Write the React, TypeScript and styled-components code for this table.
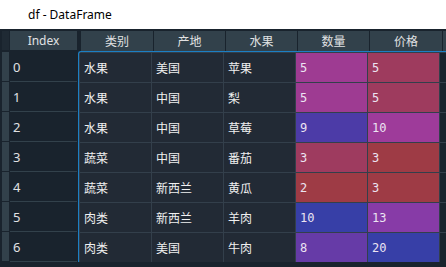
import styled, { createGlobalStyle } from 'styled-components';

const GlobalStyle = createGlobalStyle`
  html, body {
    margin: 0;
    padding: 0;
    background: #19232d;
  }
  body {
    font-family: "Noto Sans", "Noto Sans CJK SC", sans-serif;
  }
`;

type Row = {
  kind: string;
  origin: string;
  fruit: string;
  qty: number;
  price: number;
};

const rows: Row[] = [
  { kind: '水果', origin: '美国', fruit: '苹果', qty: 5, price: 5 },
  { kind: '水果', origin: '中国', fruit: '梨', qty: 5, price: 5 },
  { kind: '水果', origin: '中国', fruit: '草莓', qty: 9, price: 10 },
  { kind: '蔬菜', origin: '中国', fruit: '番茄', qty: 3, price: 3 },
  { kind: '蔬菜', origin: '新西兰', fruit: '黄瓜', qty: 2, price: 3 },
  { kind: '肉类', origin: '新西兰', fruit: '羊肉', qty: 10, price: 13 },
  { kind: '肉类', origin: '美国', fruit: '牛肉', qty: 8, price: 20 },
];

const headers = ['类别', '产地', '水果', '数量', '价格'];

// spyder-like heat map: hue from blue (max) to red (min), alpha over the dark bg
function heat(v: number, min: number, max: number) {
  const hue = (0.66 + (0.33 * (max - v)) / (max - min)) * 360;
  const c = 0.7;
  const x = c * (1 - Math.abs(((hue / 60) % 2) - 1));
  let r = 0, g = 0, b = 0;
  if (hue < 60) [r, g, b] = [c, x, 0];
  else if (hue < 120) [r, g, b] = [x, c, 0];
  else if (hue < 180) [r, g, b] = [0, c, x];
  else if (hue < 240) [r, g, b] = [0, x, c];
  else if (hue < 300) [r, g, b] = [x, 0, c];
  else [r, g, b] = [c, 0, x];
  const m = 1 - c;
  const bg = [25, 35, 45];
  const mix = (ch: number, i: number) => Math.round(0.58 * (ch + m) * 255 + 0.42 * bg[i]);
  return `rgb(${mix(r, 0)}, ${mix(g, 1)}, ${mix(b, 2)})`;
}

const qtys = rows.map((r) => r.qty);
const prices = rows.map((r) => r.price);

const Window = styled.div`
  width: 446px;
  height: 267px;
  overflow: hidden;
  background: #19232d;
`;

const TitleBar = styled.div`
  height: 29px;
  background: #ffffff;
  color: #000;
  font-size: 12px;
  line-height: 29px;
  padding-left: 28px;
`;

const Body = styled.div`
  display: flex;
  padding: 2px 0 0 2px;
  gap: 2px;
`;

const IndexPane = styled.div`
  display: grid;
  grid-template-columns: 7px 67px;
  column-gap: 1px;
  grid-auto-rows: 29px;
  row-gap: 1px;
  grid-template-rows: 20px;
  align-content: start;
`;

const Corner = styled.div`
  background: #1f2a34;
  margin-bottom: 1px;
`;

const HeaderCell = styled.div`
  background: #32414b;
  color: #e0e1e3;
  font-size: 12px;
  display: flex;
  align-items: center;
  justify-content: center;
`;

const IndexHeader = styled(HeaderCell)`
  margin-bottom: 1px;
`;

const RowStrip = styled.div`
  background: #32414b;
`;

const IndexCell = styled.div`
  background: #19232d;
  color: #e0e1e3;
  font-size: 13px;
  padding-left: 3px;
  display: flex;
  align-items: center;
  box-shadow: 0 1px 0 #32414b;
`;

const DataPane = styled.div`
  display: flex;
  flex-direction: column;
  flex: 1;
`;

const HeaderRow = styled.div`
  display: grid;
  grid-template-columns: 72px 71px 71px 71px 72px 1fr;
  column-gap: 1px;
  height: 20px;
  padding-left: 2px;
`;

const Grid = styled.div`
  display: grid;
  grid-template-columns: 71px 71px 71px 71px 71px 1fr;
  grid-auto-rows: 29px;
  gap: 1px;
  background: #333f4b;
  border-top: 1px solid #1b7fc4;
  border-left: 1px solid #1b7fc4;
  border-top-left-radius: 3px;
  padding: 1px 0 0 1px;
  margin-left: -1px;
`;

const Cell = styled.div<{ $bg?: string; $mono?: boolean }>`
  background: ${(p) => p.$bg ?? '#222a35'};
  color: ${(p) => (p.$mono ? '#ece4f2' : '#f0f0f0')};
  font-family: ${(p) =>
    p.$mono
      ? '"DejaVu Sans Mono", "Liberation Mono", monospace'
      : '"Noto Sans CJK SC", sans-serif'};
  font-size: 12px;
  padding-left: 4px;
  display: flex;
  align-items: center;
`;

const Edge = styled.div`
  background: #19232d;
`;

export default function App() {
  const qMin = Math.min(...qtys), qMax = Math.max(...qtys);
  const pMin = Math.min(...prices), pMax = Math.max(...prices);
  return (
    <Window>
      <GlobalStyle />
      <TitleBar>df - DataFrame</TitleBar>
      <Body>
        <IndexPane>
          <Corner />
          <IndexHeader>Index</IndexHeader>
          {rows.map((_, i) => (
            <>
              <RowStrip key={`s${i}`} />
              <IndexCell key={`i${i}`}>{i}</IndexCell>
            </>
          ))}
        </IndexPane>
        <DataPane>
          <HeaderRow>
            {headers.map((h) => (
              <HeaderCell key={h}>{h}</HeaderCell>
            ))}
            <HeaderCell />
          </HeaderRow>
          <Grid>
            {rows.map((r, i) => (
              <>
                <Cell key={`a${i}`}>{r.kind}</Cell>
                <Cell key={`b${i}`}>{r.origin}</Cell>
                <Cell key={`c${i}`}>{r.fruit}</Cell>
                <Cell key={`d${i}`} $mono $bg={heat(r.qty, qMin, qMax)}>
                  {r.qty}
                </Cell>
                <Cell key={`e${i}`} $mono $bg={heat(r.price, pMin, pMax)}>
                  {r.price}
                </Cell>
                <Edge key={`f${i}`} />
              </>
            ))}
          </Grid>
        </DataPane>
      </Body>
    </Window>
  );
}
